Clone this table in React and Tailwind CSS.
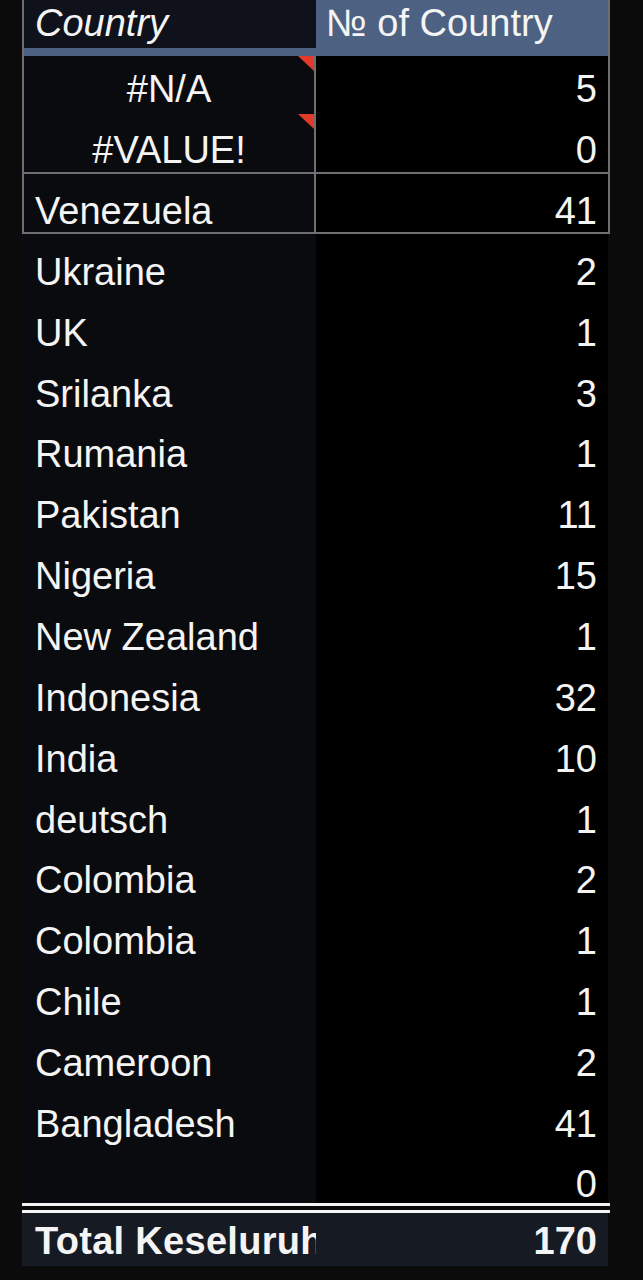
import React from "react";

const rows = [
  ["Ukraine", "2"],
  ["UK", "1"],
  ["Srilanka", "3"],
  ["Rumania", "1"],
  ["Pakistan", "11"],
  ["Nigeria", "15"],
  ["New Zealand", "1"],
  ["Indonesia", "32"],
  ["India", "10"],
  ["deutsch", "1"],
  ["Colombia", "2"],
  ["Colombia", "1"],
  ["Chile", "1"],
  ["Cameroon", "2"],
  ["Bangladesh", "41"],
];

function Tri() {
  return (
    <svg className="absolute right-0 top-0" width="16" height="15" viewBox="0 0 16 15">
      <polygon points="0,0 16,0 16,15" fill="#e23a2c" />
    </svg>
  );
}

export default function App() {
  return (
    <div
      className="min-h-screen w-[643px] bg-[#0b0b0c] pl-[22px] text-[38px] text-[#f4f4f4]"
      style={{ fontFamily: '"Liberation Sans", Arial, sans-serif' }}
    >
      <div className="w-[588px]">
        {/* bordered top section */}
        <div className="border-x-2 border-b-2 border-[#6f6f6f]">
          <div className="flex h-[48px] leading-none">
            <div className="flex w-[292px] items-end bg-[#0f121a] pb-[6px] pl-[11px] italic">
              Country
            </div>
            <div className="flex w-[292px] items-end bg-[#4d6183] pb-[6px] pl-[10px]">
              № of Country
            </div>
          </div>
          <div className="h-[8px] bg-[#4d6183]"></div>
          <div className="flex border-b-2 border-[#6f6f6f] leading-none">
            <div className="w-[292px] border-r-2 border-[#6f6f6f] bg-[#0a0b0e]">
              <div className="relative flex h-[58px] items-end justify-center pb-[6px]">
                #N/A
                <Tri />
              </div>
              <div className="relative flex h-[58px] items-end justify-center pb-[3px]">
                #VALUE!
                <Tri />
              </div>
            </div>
            <div className="flex-1 bg-black">
              <div className="flex h-[58px] items-end justify-end pb-[6px] pr-[11px]">5</div>
              <div className="flex h-[58px] items-end justify-end pb-[3px] pr-[11px]">0</div>
            </div>
          </div>
          <div className="flex h-[58px] leading-none">
            <div className="flex w-[292px] items-end border-r-2 border-[#6f6f6f] bg-[#0a0b0e] pb-[2px] pl-[11px]">
              Venezuela
            </div>
            <div className="flex flex-1 items-end justify-end bg-black pb-[2px] pr-[11px]">41</div>
          </div>
        </div>

        {/* plain rows */}
        {rows.map(([name, n], i) => (
          <div key={i} className="flex h-[60.87px] leading-none">
            <div className="flex w-[294px] items-end bg-[#0a0b0e] pb-[4px] pl-[13px]">{name}</div>
            <div className="flex w-[292px] items-end justify-end bg-black pb-[4px] pr-[11px]">{n}</div>
          </div>
        ))}
        <div className="flex h-[56px] leading-none">
          <div className="w-[294px] bg-[#0a0b0e]"></div>
          <div className="flex w-[292px] items-end justify-end bg-black pb-[0px] pr-[11px]">0</div>
        </div>

        {/* double line */}
        <div className="h-[3px] w-[588px] bg-[#f4f4f4]"></div>
        <div className="h-[4px] w-[588px]"></div>
        <div className="h-[3px] w-[588px] bg-[#f4f4f4]"></div>

        {/* total */}
        <div className="flex h-[53px] w-[586px] bg-[#161a23] font-bold leading-none">
          <div className="flex w-[294px] items-end overflow-hidden whitespace-nowrap pb-[6px] pl-[13px]">
            <span className="tracking-[0.3px]">Total Keseluruhan</span>
          </div>
          <div className="flex w-[292px] items-end justify-end pb-[6px] pr-[11px]">170</div>
        </div>
      </div>
    </div>
  );
}
